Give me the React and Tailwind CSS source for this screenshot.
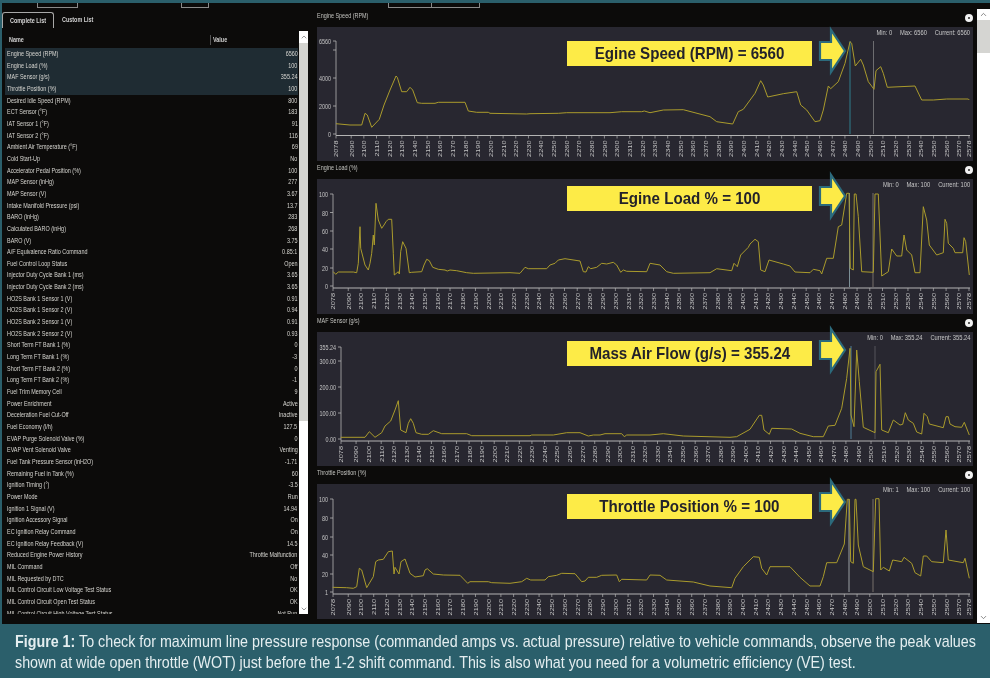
import React from "react";
import { ChevronUp, ChevronDown } from "lucide-react";

const rows = [
  ["Engine Speed (RPM)", "6560"], ["Engine Load (%)", "100"], ["MAF Sensor (g/s)", "355.24"], ["Throttle Position (%)", "100"],
  ["Desired Idle Speed (RPM)", "800"], ["ECT Sensor (°F)", "183"], ["IAT Sensor 1 (°F)", "91"], ["IAT Sensor 2 (°F)", "116"],
  ["Ambient Air Temperature (°F)", "69"], ["Cold Start-Up", "No"], ["Accelerator Pedal Position (%)", "100"], ["MAP Sensor (inHg)", "277"],
  ["MAP Sensor (V)", "3.67"], ["Intake Manifold Pressure (psi)", "13.7"], ["BARO (inHg)", "283"], ["Calculated BARO (inHg)", "268"],
  ["BARO (V)", "3.75"], ["A/F Equivalence Ratio Command", "0.85:1"], ["Fuel Control Loop Status", "Open"], ["Injector Duty Cycle Bank 1 (ms)", "3.65"],
  ["Injector Duty Cycle Bank 2 (ms)", "3.65"], ["HO2S Bank 1 Sensor 1 (V)", "0.91"], ["HO2S Bank 1 Sensor 2 (V)", "0.94"], ["HO2S Bank 2 Sensor 1 (V)", "0.91"],
  ["HO2S Bank 2 Sensor 2 (V)", "0.93"], ["Short Term FT Bank 1 (%)", "0"], ["Long Term FT Bank 1 (%)", "-3"], ["Short Term FT Bank 2 (%)", "0"],
  ["Long Term FT Bank 2 (%)", "-1"], ["Fuel Trim Memory Cell", "9"], ["Power Enrichment", "Active"], ["Deceleration Fuel Cut-Off", "Inactive"],
  ["Fuel Economy (l/h)", "127.5"], ["EVAP Purge Solenoid Valve (%)", "0"], ["EVAP Vent Solenoid Valve", "Venting"], ["Fuel Tank Pressure Sensor (inH2O)", "-1.71"],
  ["Remaining Fuel in Tank (%)", "60"], ["Ignition Timing (°)", "-3.5"], ["Power Mode", "Run"], ["Ignition 1 Signal (V)", "14.94"],
  ["Ignition Accessory Signal", "On"], ["EC Ignition Relay Command", "On"], ["EC Ignition Relay Feedback (V)", "14.5"], ["Reduced Engine Power History", "Throttle Malfunction"],
  ["MIL Command", "Off"], ["MIL Requested by DTC", "No"], ["MIL Control Circuit Low Voltage Test Status", "OK"], ["MIL Control Circuit Open Test Status", "OK"],
  ["MIL Control Circuit High Voltage Test Status", "Not Run"],
];

const toPts = (leftX, leftY, a, rightY, b) =>
  a.map(([x, y]) => `${(310 + x / 3).toFixed(1)},${(leftY + y / 3).toFixed(1)}`)
    .concat(b.map(([x, y]) => `${(650 + x / 3).toFixed(1)},${(rightY + y / 3).toFixed(1)}`))
    .join(" ");

const t1 = toPts(0, 0, [[78,371],[120,375],[155,375],[165,340],[172,345],[185,382],[208,358],[222,315],[240,270],[258,228],[262,232],[275,275],[290,275],[300,262],[308,270],[322,308],[335,310],[375,310],[385,307],[465,307],[475,333],[500,337],[535,337],[540,340],[650,342],[660,341],[745,340],[770,338],[900,338],[935,335],[995,335],[1003,333],[1020,338]], 0,
  [[40,330],[100,329],[180,350],[200,365],[248,372],[265,335],[280,328],[315,280],[332,242],[340,255],[353,291],[400,281],[440,275],[452,315],[470,330],[495,365],[510,362],[520,330],[535,258],[542,266],[565,245],[585,190],[600,125],[605,130],[616,198],[632,178],[640,195],[655,245],[672,268],[678,212],[692,200],[700,220],[712,262],[795,258],[815,300],[850,300],[890,297],[955,297],[958,300]]);

const t2 = toPts(0, 170, [[70,305],[77,313],[85,306],[130,306],[140,308],[145,280],[150,170],[152,235],[165,285],[175,300],[180,280],[185,250],[190,195],[193,225],[198,100],[205,150],[215,175],[222,165],[228,155],[235,148],[245,148],[250,250],[253,315],[265,305],[268,312],[272,245],[278,215],[288,235],[298,308],[305,307],[335,305],[342,285],[350,268],[358,272],[368,292],[385,298],[405,300],[412,303],[420,300],[440,302],[470,308],[490,310],[600,308],[630,310],[645,292],[655,296],[710,296],[720,285],[735,280],[745,270],[765,266],[810,273],[820,305],[828,306],[835,290],[842,296],[860,292],[875,280],[890,282],[910,277],[920,285],[932,307],[940,300],[950,304],[1010,305],[1020,280]], 170,
  [[30,285],[50,305],[70,310],[180,308],[200,296],[245,302],[252,280],[262,290],[272,255],[295,232],[300,222],[315,208],[325,215],[332,300],[345,305],[357,270],[400,282],[420,288],[435,306],[480,308],[490,298],[510,302],[515,312],[530,265],[550,265],[565,170],[575,165],[590,70],[597,70],[601,295],[610,300],[613,72],[618,72],[625,140],[635,305],[670,307],[675,72],[685,72],[695,318],[715,305],[725,237],[740,258],[755,258],[762,195],[770,240],[785,255],[795,308],[810,308],[820,110],[830,150],[838,225],[860,255],[880,248],[885,148],[890,160],[895,220],[910,235],[915,248],[938,248],[942,203],[947,215],[958,315]]);

const t3 = toPts(0, 320, [[92,352],[165,352],[178,335],[195,352],[215,338],[225,318],[242,303],[255,270],[265,242],[272,330],[288,338],[295,310],[302,296],[310,310],[318,338],[335,343],[355,343],[370,332],[395,341],[470,341],[485,347],[660,347],[665,345],[730,345],[770,338],[810,338],[835,348],[850,345],[870,345],[885,341],[935,341],[943,350],[950,345],[1020,345]], 320,
  [[40,341],[100,348],[240,352],[260,350],[300,328],[328,286],[335,286],[342,330],[358,343],[365,325],[425,327],[450,340],[490,350],[520,350],[535,318],[555,316],[575,265],[590,175],[600,85],[603,285],[612,320],[620,90],[628,185],[640,322],[675,338],[678,155],[690,133],[695,330],[715,338],[730,300],[750,315],[758,313],[766,278],[775,300],[790,310],[800,336],[815,342],[822,280],[832,290],[838,312],[880,323],[888,290],[895,290],[900,312],[915,320],[935,322],[943,307],[958,345]]);

const t4 = toPts(0, 470, [[68,352],[110,353],[130,355],[140,350],[148,295],[155,300],[170,353],[190,320],[197,275],[205,270],[220,268],[235,245],[247,243],[252,312],[255,292],[267,312],[273,275],[285,267],[300,310],[315,321],[340,317],[345,300],[352,296],[370,312],[400,315],[450,316],[473,340],[480,335],[535,335],[545,338],[600,340],[635,335],[650,325],[662,330],[705,330],[715,320],[740,316],[755,310],[795,311],[815,335],[825,333],[835,322],[860,322],[875,316],[920,315],[928,335],[935,328],[1010,330],[1020,315]], 470,
  [[30,316],[50,330],[130,336],[180,348],[245,353],[255,325],[280,290],[310,260],[328,262],[335,295],[350,315],[360,290],[420,290],[450,322],[480,348],[510,348],[520,320],[530,278],[560,278],[583,222],[592,88],[598,88],[602,275],[610,280],[615,88],[618,88],[625,225],[640,290],[670,305],[677,86],[687,86],[692,300],[700,292],[718,303],[728,270],[755,275],[762,262],[785,280],[795,308],[812,318],[820,258],[830,258],[845,275],[880,278],[888,180],[895,270],[940,278],[945,265],[958,325]]);

const xTicks = [2078, 2090];
for (let v = 2100; v <= 2570; v += 10) xTicks.push(v);
xTicks.push(2578);

const charts = [
  { title: "Engine Speed (RPM)", top: 27, h: 134, ax: 336, ay: 135.5, axTop: 41, trace: t1,
    y: [["6560", 41], ["", 50], ["4000", 78], ["2000", 106], ["0", 134]],
    stats: ["Min: 0", "Max: 6560", "Current: 6560"], cursors: [[850, "#2f7f8c"], [873.5, "#6d6d70"]], cy: [41, 134],
    call: "Egine Speed (RPM) = 6560", boxTop: "mt-[14px]", arrowTop: "top-[1px]" },
  { title: "Engine Load (%)", top: 179, h: 135, ax: 333, ay: 288, axTop: 194, trace: t2,
    y: [["100", 194], ["80", 212.5], ["60", 231], ["40", 249], ["20", 268], ["0", 286]],
    stats: ["Min: 0", "Max: 100", "Current: 100"], cursors: [[849.5, "#7c8f96"], [873, "#77716a"]], cy: [193, 287],
    call: "Egine Load % = 100", boxTop: "mt-[7px]", arrowTop: "top-[-6px]" },
  { title: "MAF Sensor (g/s)", top: 332, h: 134, ax: 341, ay: 441, axTop: 347, trace: t3,
    y: [["355.24", 347], ["300.00", 361], ["200.00", 387], ["100.00", 413], ["0.00", 439]],
    stats: ["Min: 0", "Max: 355.24", "Current: 355.24"], cursors: [[851, "#4f7f96"], [875, "#55555a"]], cy: [346, 439],
    call: "Mass Air Flow (g/s) = 355.24", boxTop: "mt-[9px]", arrowTop: "top-[-5px]" },
  { title: "Throttle Position (%)", top: 484, h: 135, ax: 333, ay: 594, axTop: 499, trace: t4,
    y: [["100", 499], ["80", 518], ["60", 537], ["40", 555], ["20", 574], ["1", 592]],
    stats: ["Min: 1", "Max: 100", "Current: 100"], cursors: [[849, "#9aa0a3"], [873, "#77716a"]], cy: [499, 592],
    call: "Throttle Position % = 100", boxTop: "mt-[10px]", arrowTop: "top-[-5px]" },
];

function Small({ children, className = "" }) {
  return <span className={`block whitespace-nowrap origin-left scale-x-[0.68] ${className}`}>{children}</span>;
}

function Chart({ c }) {
  const k = (969 - c.ax) / 500;
  const sans = "Liberation Sans, sans-serif";
  return (
    <section className="flex flex-col">
      <div className="flex h-[18px] items-start justify-between">
        <Small className="text-[8px] leading-[14px] text-[#c4c4c0]">{c.title}</Small>
        <span className="mt-[5px] h-[8px] w-[8px] rounded-full border-[3px] border-[#f2f2f2] bg-[#2a2a2a]" />
      </div>
      <div className="relative bg-[#282730]" style={{ height: c.h }}>
        <svg className="absolute inset-0 h-full w-full" viewBox={`317 ${c.top} 656 ${c.h}`}>
          <line x1={c.ax} y1={c.axTop} x2={c.ax} y2={c.ay} stroke="#b4b4b4" strokeWidth="0.8" />
          <line x1={c.ax} y1={c.ay} x2="970" y2={c.ay} stroke="#b4b4b4" strokeWidth="1" />
          {c.y.map(([l, y]) => (
            <g key={y}>
              <line x1={c.ax - 3} y1={y} x2={c.ax} y2={y} stroke="#b4b4b4" strokeWidth="0.8" />
              <text transform={`translate(${c.ax - 5} ${y + 3}) scale(0.68 1)`} textAnchor="end" fontSize="8" fontFamily={sans} fill="#c4c4c4">{l}</text>
            </g>
          ))}
          {xTicks.map((v) => {
            const x = c.ax + (v - 2078) * k;
            return (
              <g key={v}>
                <line x1={x} y1={c.ay} x2={x} y2={c.ay + 3} stroke="#b4b4b4" strokeWidth="0.7" />
                <text transform={`translate(${x + 2.4} ${c.ay + 5}) rotate(-90) scale(1 0.8)`} textAnchor="end" fontSize="7.4" fontFamily={sans} fill="#c4c4c4">{v}</text>
              </g>
            );
          })}
          {c.cursors.map(([x, col]) => (
            <line key={x} x1={x} y1={c.cy[0]} x2={x} y2={c.cy[1]} stroke={col} strokeWidth="1" />
          ))}
          <polyline points={c.trace} fill="none" stroke="#aa9b2c" strokeWidth="1" strokeLinejoin="round" />
        </svg>
        <div className="absolute right-[3px] top-[0px] flex origin-right scale-x-[0.72] gap-[11px] whitespace-nowrap pt-[1px] text-[8px] leading-[10px] text-[#c8c8c8]">
          {c.stats.map((s) => <span key={s}>{s}</span>)}
        </div>
        <div className={`absolute left-[250px] top-0 flex h-[25px] w-[245px] items-center justify-center bg-[#fdeb47] ${c.boxTop}`}>
          <span className="block scale-x-[0.89] whitespace-nowrap text-[17px] font-bold leading-none text-[#23222a]">{c.call}</span>
        </div>
        <svg className={`absolute left-[501px] h-[46px] w-[30px] overflow-visible ${c.arrowTop}`} viewBox="0 0 30 46">
          <polygon points="2,14 13,14 13,2 27,23 13,44 13,32 2,32" fill="#fdeb47" stroke="#2c6a7c" strokeWidth="2.2" strokeMiterlimit="8" />
        </svg>
      </div>
    </section>
  );
}

export default function App() {
  return (
    <div className="flex h-[678px] w-[990px] flex-col overflow-hidden bg-[#2b5f6b] pt-[3px] font-['Liberation_Sans',sans-serif] blur-[0.3px]">
      <main className="ml-[2px] flex h-[621px] bg-[#0c0b0a]">
        <div className="flex w-[306px] flex-col">
          <div className="flex h-[5px]">
            <span className="ml-[35px] w-[41px] border border-t-0 border-[#8a8a8a]" />
            <span className="ml-[103px] w-[28px] border border-t-0 border-[#8a8a8a]" />
          </div>
          <div className="mt-[4px] flex h-[19px] items-start">
            <div className="flex h-[16px] w-[52px] items-center rounded-t-[3px] border border-b-0 border-[#a8a8a8] pl-[7px]">
              <Small className="text-[8px] font-bold text-[#d8d8d8]">Complete List</Small>
            </div>
            <div className="flex h-[16px] items-center pl-[8px]">
              <Small className="text-[8px] font-bold text-[#d0d0d0]">Custom List</Small>
            </div>
          </div>
          <div className="flex h-[583px] pl-[3px]">
            <div className="w-[294px] overflow-hidden pr-[1px]">
              <div className="relative flex h-[17px] items-center text-[8px] font-bold text-[#d0d0d0]">
                <span className="w-[205px] pl-[4px]"><Small>Name</Small></span>
                <span className="h-[10px] w-px bg-[#555]" />
                <span className="pl-[2px]"><Small>Value</Small></span>
              </div>
              {rows.map(([n, v], i) => (
                <div key={n} className={`flex h-[11.67px] items-center justify-between pl-[2px] pr-[0.5px] text-[8px] leading-[11.67px] text-[#d8d7d2] ${i < 4 ? "bg-[#1f2c33]" : ""}`}>
                  <Small className="w-[180px]">{n}</Small>
                  <span className="block origin-right scale-x-[0.68] whitespace-nowrap">{v}</span>
                </div>
              ))}
            </div>
            <div className="flex w-[9px] flex-col bg-white">
              <div className="flex h-[12px] items-center justify-center text-[#666]"><ChevronUp size={8} strokeWidth={2} /></div>
              <div className="h-[378px] bg-[#d4d4d0]" />
              <div className="flex-1" />
              <div className="flex h-[10px] items-center justify-center text-[#666]"><ChevronDown size={8} strokeWidth={2} /></div>
            </div>
          </div>
        </div>
        <div className="ml-[9px] flex w-[656px] flex-col">
          <div className="flex h-[6px]">
            <span className="ml-[71px] h-[5px] w-[44px] border border-t-0 border-[#8a8a8a]" />
            <span className="h-[5px] w-[48px] border border-l-0 border-t-0 border-[#8a8a8a]" />
          </div>
          {charts.map((c) => <Chart key={c.title} c={c} />)}
        </div>
        <div className="ml-[4px] mt-[6px] flex h-[614px] w-[13px] flex-col bg-white">
          <div className="flex h-[11px] items-center justify-center text-[#666]"><ChevronUp size={9} strokeWidth={2} /></div>
          <div className="h-[33px] bg-[#d5d5d2]" />
          <div className="flex-1" />
          <div className="flex h-[12px] items-center justify-center text-[#666]"><ChevronDown size={9} strokeWidth={2} /></div>
        </div>
      </main>
      <footer className="px-[15px] pt-[7px] text-[17px] leading-[21px] text-[#e4eef0]">
        <p className="origin-left scale-x-[0.84] whitespace-nowrap"><b className="font-bold">Figure 1:</b> To check for maximum line pressure response (commanded amps vs. actual pressure) relative to vehicle commands, observe the peak values</p>
        <p className="origin-left scale-x-[0.84] whitespace-nowrap">shown at wide open throttle (WOT) just before the 1-2 shift command. This is also what you need for a volumetric efficiency (VE) test.</p>
      </footer>
    </div>
  );
}
